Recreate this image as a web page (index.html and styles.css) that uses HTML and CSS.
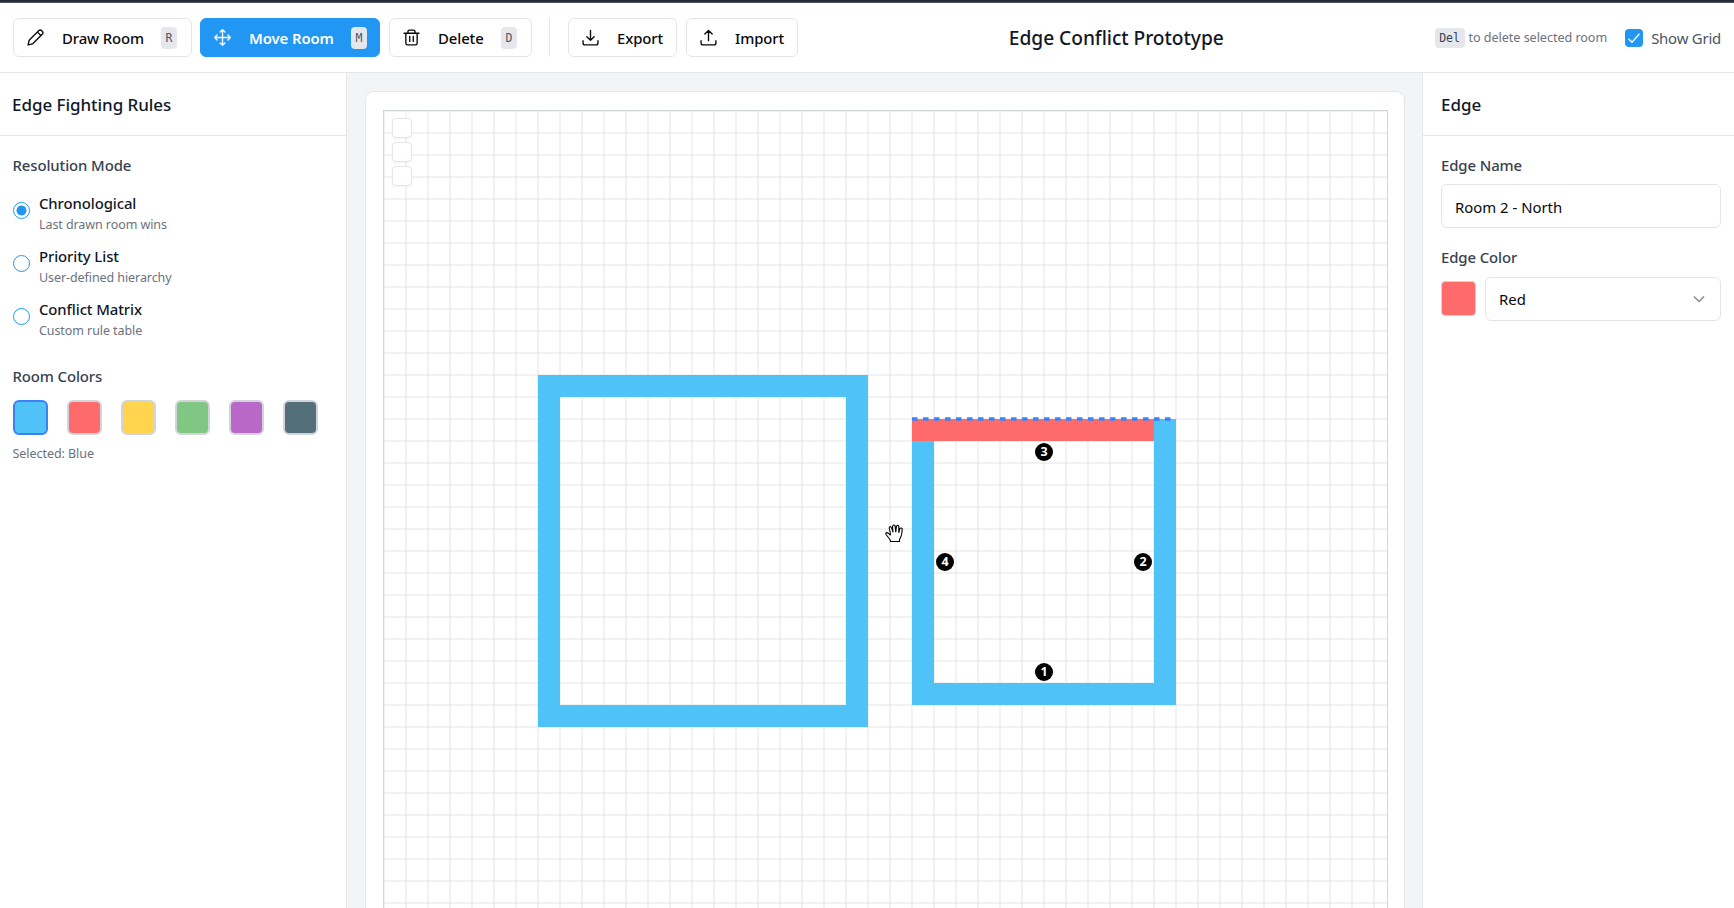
FILE: index.html
```html
<!DOCTYPE html>
<html lang="en">
<head>
<meta charset="utf-8">
<title>Edge Conflict Prototype</title>
<link rel="stylesheet" href="styles.css">
</head>
<body>
<header class="toolbar">
  <div class="tools">
    <button class="btn btn-draw"><svg class="icon" viewBox="0 0 24 24"><path d="M1.500 22.500l1.600-6.600L16.800 2.200a2.600 2.600 0 0 1 3.700 0l1.300 1.300a2.600 2.600 0 0 1 0 3.700L8.100 20.900z"/><path d="M14.800 4.400l4.800 4.800"/></svg><span class="label">Draw Room</span><kbd class="key">R</kbd></button>
    <button class="btn btn-move active"><svg class="icon" viewBox="0 0 24 24"><path d="M12 1v22M1 12h22M8.500 4.300L12 1l3.500 3.300M8.500 19.700L12 23l3.500-3.300M4.300 8.500L1 12l3.300 3.500M19.700 8.500L23 12l-3.300 3.500"/></svg><span class="label">Move Room</span><kbd class="key">M</kbd></button>
    <button class="btn btn-delete"><svg class="icon" viewBox="0 0 24 24"><path d="M1.500 6h21M4 6v14a2.500 2.500 0 0 0 2.500 2.500h11A2.500 2.500 0 0 0 20 20V6M7 6V3.700A2.200 2.200 0 0 1 9.200 1.500h5.600A2.200 2.200 0 0 1 17 3.700V6M9.500 10.500v7M14.500 10.500v7"/></svg><span class="label">Delete</span><kbd class="key">D</kbd></button>
    <span class="divider"></span>
    <button class="btn btn-export"><svg class="icon" viewBox="0 0 24 24"><path d="M12 2v14M6.800 10.800L12 16l5.200-5.200M1.500 16.500v3.300A2.700 2.700 0 0 0 4.200 22.500h15.600a2.700 2.700 0 0 0 2.700-2.700v-3.300"/></svg><span class="label">Export</span></button>
    <button class="btn btn-import"><svg class="icon" viewBox="0 0 24 24"><path d="M12 16.500V2M6.800 7.200L12 2l5.200 5.200M1.500 16.500v3.300A2.700 2.700 0 0 0 4.200 22.500h15.600a2.700 2.700 0 0 0 2.700-2.700v-3.300"/></svg><span class="label">Import</span></button>
  </div>
  <h1 class="title">Edge Conflict Prototype</h1>
  <div class="options">
    <span class="hint"><kbd class="key-del">Del</kbd>to delete selected room</span>
    <label class="grid-toggle"><svg class="checkbox" viewBox="0 0 18 18"><rect width="18" height="18" rx="4"/><path d="M3.500 9.800l3.500 3.500L14.500 4.800"/></svg>Show Grid</label>
  </div>
</header>
<main class="workspace">
  <aside class="rules">
    <h2 class="panel-title">Edge Fighting Rules</h2>
    <div class="panel-body">
      <h3 class="section">Resolution Mode</h3>
      <div class="modes">
        <label class="mode"><span class="radio checked"></span><span class="mode-text"><b>Chronological</b><small>Last drawn room wins</small></span></label>
        <label class="mode"><span class="radio"></span><span class="mode-text"><b>Priority List</b><small>User-defined hierarchy</small></span></label>
        <label class="mode"><span class="radio"></span><span class="mode-text"><b>Conflict Matrix</b><small>Custom rule table</small></span></label>
      </div>
      <h3 class="section">Room Colors</h3>
      <div class="swatches">
        <span class="swatch blue selected"></span><span class="swatch red"></span><span class="swatch yellow"></span><span class="swatch green"></span><span class="swatch purple"></span><span class="swatch slate"></span>
      </div>
      <p class="selected-note">Selected: Blue</p>
    </div>
  </aside>
  <section class="stage">
    <div class="card">
      <div class="canvas">
        <svg class="drawing" width="1003" height="900">
          <defs><pattern id="grid" width="22" height="22" patternUnits="userSpaceOnUse"><path class="grid-line" d="M0 0h1v22H0zM21 0h1v22h-1z"/><path class="grid-line" d="M0 0h22v1H0zM0 21h22v1H0z"/></pattern></defs>
          <rect width="1003" height="900" fill="url(#grid)"/>
          <path class="wall" d="M154 264h330v352H154zM176 286v308h286V286z"/>
          <path class="wall" d="M528 308h264v286H528zM550 330v242h220V330z"/>
          <rect class="wall-red" x="528" y="308" width="242" height="22"/>
          <path class="selection" d="M528 308h264"/>
          <g class="marker"><circle cx="660" cy="341" r="9"/><text x="660" y="344.500">3</text></g>
          <g class="marker"><circle cx="561" cy="451" r="9"/><text x="561" y="454.500">4</text></g>
          <g class="marker"><circle cx="759" cy="451" r="9"/><text x="759" y="454.500">2</text></g>
          <g class="marker"><circle cx="660" cy="561" r="9"/><text x="660" y="564.500">1</text></g>
          <path class="hand" transform="translate(501 413)" d="M5.500 17.500L5 15.500 1 10.500Q.300 8.800 2 8.600 3 8.600 5.300 11V9L4.200 4Q4.300 2.300 5.800 2.700L6.800 4.500 8 8 7.500 2.500Q8.500.200 10 1.500L10.800 8 11.500 2Q12.800.600 13.800 2.200V8.500L14.800 4.500Q16.200 3.300 17.300 4.800L16.800 9 16.200 12 14.500 15.500V17.500z"/>
        </svg>
        <div class="mini-tools"><span class="mini"></span><span class="mini"></span><span class="mini"></span></div>
      </div>
    </div>
  </section>
  <aside class="inspector">
    <h2 class="panel-title">Edge</h2>
    <div class="panel-body">
      <h3 class="section">Edge Name</h3>
      <div class="field name-field">Room 2 - North</div>
      <h3 class="section">Edge Color</h3>
      <div class="color-row">
        <span class="color-chip"></span>
        <div class="field select">Red<svg class="chevron" viewBox="0 0 12 8"><path d="M1 1.500l5 5 5-5"/></svg></div>
      </div>
    </div>
  </aside>
</main>
</body>
</html>
```
FILE: styles.css
```css
* { box-sizing: border-box; }
body {
  margin: 0;
  height: 908px;
  overflow: hidden;
  display: flex;
  flex-direction: column;
  background: #fff;
  color: #111827;
  font: 400 14.9px/22px "Noto Sans", "Open Sans", sans-serif;
  letter-spacing: -0.05px;
  border-top: 2px solid #282a36;
}
h1, h2, h3, p { margin: 0; }

.toolbar {
  flex: none;
  height: 71px;
  display: flex;
  align-items: center;
  justify-content: space-between;
  padding: 0 13px;
  border-top: 1px solid #4a5468;
  border-bottom: 1px solid #e5e7eb;
}
.tools { display: flex; align-items: center; }
.btn {
  height: 39px;
  display: flex;
  align-items: center;
  padding: 0 14px 0 13px;
  border: 1px solid #e5e5e5;
  border-radius: 6px;
  background: #fff;
  color: #09090b;
  font: inherit;
  font-weight: 500;
  letter-spacing: -0.1px;
  white-space: nowrap;
}
.btn-draw { width: 179px; margin-right: 8px; }
.btn-move { width: 180px; margin-right: 9px; padding-right: 12px; }
.btn-delete { width: 143px; }
.btn-export { width: 109px; margin-right: 9px; }
.btn-import { width: 112px; }
.btn.active { background: #2196f3; border-color: #2196f3; color: #fff; font-weight: 600; }
.icon {
  flex: none;
  width: 17px;
  height: 17px;
  margin-right: 18px;
  overflow: visible;
  fill: none;
  stroke: currentColor;
  stroke-width: 1.9;
  stroke-linecap: round;
  stroke-linejoin: round;
}
.btn-delete .icon, .btn-export .icon, .btn-import .icon { margin-top: -1px; }
.key {
  width: 16px;
  height: 22px;
  margin-left: auto;
  border-radius: 4px;
  background: #e5e7eb;
  color: #4b5563;
  font: 400 11.500px/22px "DejaVu Sans Mono", monospace;
  text-align: center;
}
.divider { width: 1px; height: 39px; margin: 0 18px 0 17px; background: #e5e7eb; }
.title { font-size: 19.200px; font-weight: 500; line-height: 28px; letter-spacing: -0.05px; }
.options { display: flex; align-items: center; }
.hint { display: flex; align-items: center; margin-right: 18px; color: #6b7280; font-size: 12.600px; letter-spacing: -0.05px; }
.key-del {
  width: 30px;
  height: 20px;
  margin-right: 4px;
  border-radius: 4px;
  background: #e5e7eb;
  color: #374151;
  font: 400 11.500px/20px "DejaVu Sans Mono", monospace;
  text-align: center;
}
.grid-toggle { display: flex; align-items: center; color: #4b5563; letter-spacing: -0.2px; }
.checkbox { width: 18px; height: 18px; margin-right: 8px; fill: #2196f3; }
.checkbox path { fill: none; stroke: #fff; stroke-width: 1.3; }

.workspace { flex: 1; min-height: 0; display: flex; }
.rules { flex: none; width: 347px; border-right: 1px solid #e5e7eb; }
.inspector { flex: none; width: 312px; border-left: 1px solid #e5e7eb; }
.panel-title {
  height: 63px;
  padding: 0 12px;
  border-bottom: 1px solid #e5e7eb;
  font-size: 17px;
  font-weight: 500;
  line-height: 64px;
}
.panel-body { padding: 17px 13px; }
.section { color: #374151; font-size: 14.9px; font-weight: 500; line-height: 24px; letter-spacing: -0.1px; }
.rules .section { text-indent: -0.5px; }

.modes { display: flex; flex-direction: column; gap: 9px; margin: 15px 0 22px; }
.mode { height: 44px; display: flex; align-items: flex-start; }
.mode:last-child { margin-top: -0.4px; }
.radio {
  width: 17px;
  height: 17px;
  margin: 10px 9px 0 0;
  border: 1px solid #2196f3;
  border-radius: 50%;
}
.radio.checked { background: radial-gradient(circle, #2196f3 4.700px, transparent 5.300px); }
.mode-text { display: flex; flex-direction: column; }
.mode b { font-weight: 500; line-height: 22px; letter-spacing: -0.1px; }
.mode small { color: #6b7280; font-size: 12.500px; line-height: 22px; letter-spacing: -0.08px; }
.swatches { display: flex; gap: 19px; margin-top: 12px; }
.swatch { width: 35px; height: 35px; border: 2px solid #d1d5db; border-radius: 6px; }
.swatch.selected { border-color: #3b82f6; }
.blue { background: #4fc3f7; }
.red { background: #ff6b6b; }
.yellow { background: #ffd54f; }
.green { background: #81c784; }
.purple { background: #ba68c8; }
.slate { background: #546e7a; }
.selected-note { margin-top: 9px; color: #6b7280; font-size: 12.500px; line-height: 20px; text-indent: -0.5px; }

.stage { flex: 1; min-width: 0; padding: 18px 17px 0 18px; background: #f3f4f6; overflow: hidden; }
.card {
  height: 960px;
  padding: 18px 16px 0 17px;
  border: 1px solid #e5e7eb;
  border-radius: 9px;
  background: #fff;
}
.canvas { position: relative; width: 1005px; height: 902px; border: 1px solid #d1d5db; }
.drawing { display: block; }
.grid-line { fill: #e5e7eb; fill-opacity: .55; }
.wall { fill: #4fc3f7; fill-rule: evenodd; }
.wall-red { fill: #ff6b6b; }
.selection { fill: none; stroke: #3b82f6; stroke-width: 3.300; stroke-dasharray: 5.500 5.500; }
.marker text { fill: #fff; font: 700 12.500px "Noto Sans", sans-serif; text-anchor: middle; }
.hand { fill: #fff; stroke: #000; stroke-width: 1.1; stroke-linejoin: round; }
.mini-tools { position: absolute; left: 8px; top: 7px; display: flex; flex-direction: column; gap: 4px; }
.mini {
  width: 20px;
  height: 20px;
  border: 1px solid #e5e5e5;
  border-radius: 4px;
  background: rgba(255, 255, 255, .9);
  box-shadow: 0 1px 2px rgba(0, 0, 0, .05);
}

.inspector .panel-title { padding-left: 18px; }
.inspector .panel-body { padding-left: 18px; }
.field {
  height: 44px;
  padding: 0 13px;
  border: 1px solid #e5e5e5;
  border-radius: 6px;
  color: #09090b;
  line-height: 44px;
  letter-spacing: 0;
}
.name-field { margin: 7px 0 17px; }
.color-row { display: flex; align-items: center; gap: 9px; margin-top: 8px; }
.color-chip { width: 35px; height: 35px; margin-top: -1px; border: 1px solid #d1d5db; border-radius: 4px; background: #ff6b6b; }
.select { flex: 1; display: flex; align-items: center; justify-content: space-between; }
.chevron { width: 12px; height: 8px; margin-right: 2px; fill: none; stroke: #8a8a8a; stroke-width: 1.500; }
```
